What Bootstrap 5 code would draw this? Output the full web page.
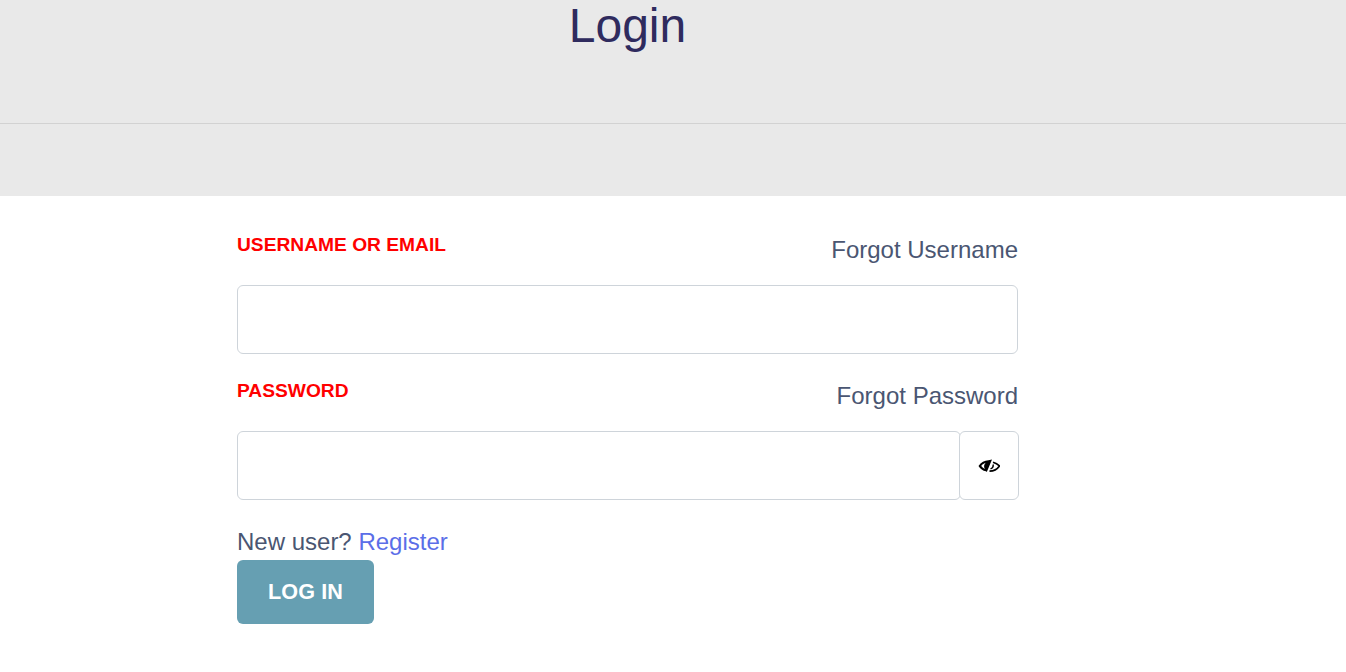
<!DOCTYPE html>
<html lang="en">
<head>
<meta charset="utf-8">
<title>Login</title>
<link href="https://cdn.jsdelivr.net/npm/bootstrap@5.3.0/dist/css/bootstrap.min.css" rel="stylesheet">
<style>
html,body{height:672px;overflow:hidden}
body{font-family:"Liberation Sans",Arial,sans-serif;background:#fff;color:#4a5672}
.hero-band{background:#e9e9e9;height:196px}
.hero-top{height:124px;border-bottom:1px solid #d2d2d2}
.hero-title{width:781px;margin:0 0 0 237px;font-size:48px;line-height:52px;color:#2f2b5e;text-align:center;font-weight:400}
.form-wrap{width:781px;margin-left:237px}
.field-head{height:34px;margin-top:36px;margin-bottom:19px}
.field-head.second{margin-top:24px}
.field-label{font-size:19.2px;font-weight:700;color:#f00;text-transform:uppercase;line-height:26px;margin:0}
.forgot{font-size:24px;line-height:28px;color:#4a5672;text-decoration:none;padding-top:4px}
.fake-input{height:69px;border:1px solid #ced4da;border-radius:6px;font-size:16px}
.eye-btn{width:60px;height:69px;margin-left:-2px;margin-right:-1px;flex:none;background:#fff;border:1px solid #ced4da;border-radius:6px;padding:0;position:relative}
.reg-line{font-size:24px;line-height:28px;margin-top:28px;color:#4a5672}
.reg-line a{color:#5b6ee8;text-decoration:none}
.login-btn{width:137px;height:64px;margin-top:4px;background:#669fb2;color:#fff;border:0;border-radius:6px;font-size:21.6px;font-weight:700;letter-spacing:.1px;padding:0}
.login-btn:hover{background:#669fb2;color:#fff}
</style>
</head>
<body>
<header class="hero-band">
  <div class="hero-top"><h1 class="hero-title">Login</h1></div>
</header>
<main class="form-wrap">
  <div class="field-head d-flex justify-content-between align-items-start">
    <label class="field-label" for="u">Username or Email</label>
    <a class="forgot" href="#">Forgot Username</a>
  </div>
  <input id="u" class="form-control fake-input" type="text">
  <div class="field-head second d-flex justify-content-between align-items-start">
    <label class="field-label" for="p">Password</label>
    <a class="forgot" href="#">Forgot Password</a>
  </div>
  <div class="d-flex">
    <input id="p" class="form-control fake-input flex-grow-1" type="password">
    <button class="eye-btn d-flex align-items-center justify-content-center" type="button" aria-label="Show password">
      <svg width="22" height="16" viewBox="0 0 22 16" fill="none">
        <path fill-rule="evenodd" d="M.5 8C3 4.500 6.500 2.400 10.500 2.300L14 1.500 8.800 14 8 13.300C4.800 12.800 2.300 10.800.5 8ZM3.200 8C4.200 9.200 5.500 10.200 6.900 10.900 6.300 9.900 6 9 6.100 8 6.300 6.500 7 5.500 8 4.800 6 5.200 4.400 6.400 3.200 8Z" fill="#000"/>
        <path d="M15 4.200C17.600 5 19.800 6.300 21.500 8 19.400 11.100 15.800 13.100 11.500 13.200" stroke="#000" stroke-width="1.700"/>
        <path d="M15 6.500C15.700 8.200 14.600 10.300 12.500 10.900" stroke="#000" stroke-width="1.500"/>
      </svg>
    </button>
  </div>
  <div class="reg-line">New user? <a href="#">Register</a></div>
  <button class="btn login-btn d-block" type="button">LOG IN</button>
</main>
<script src="https://cdn.jsdelivr.net/npm/bootstrap@5.3.0/dist/js/bootstrap.bundle.min.js"></script>
</body>
</html>
